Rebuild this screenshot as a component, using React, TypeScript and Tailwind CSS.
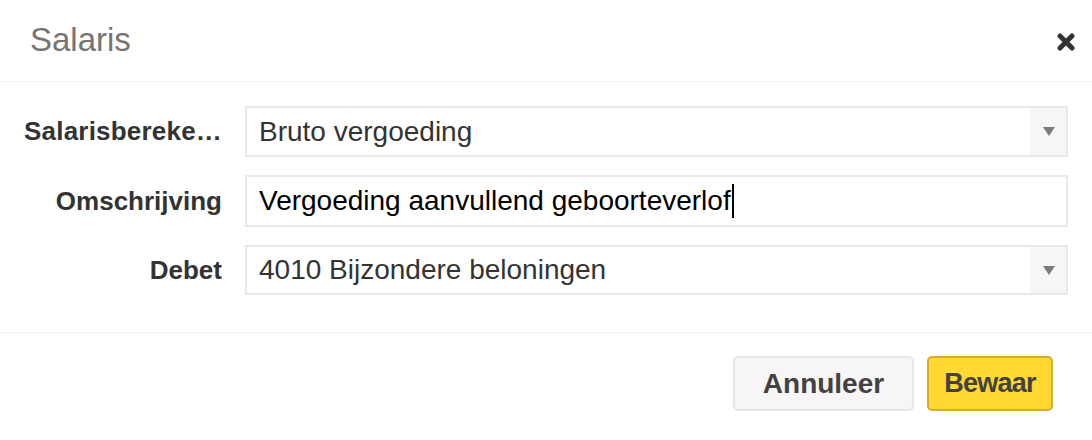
import React from "react";

function Caret() {
  return (
    <div className="w-[36px] self-stretch bg-[#f7f6f6] flex items-center justify-center pl-[2px]">
      <svg width="12" height="9" viewBox="0 0 12 9">
        <polygon points="0,0 12,0 6,9" fill="#7d7b7b" />
      </svg>
    </div>
  );
}

export default function App() {
  const font = { fontFamily: '"Liberation Sans", Arial, Helvetica, sans-serif' };
  return (
    <div className="w-[1092px] h-[440px] bg-white flex flex-col" style={font}>
      <div className="h-[82px] flex items-center justify-between pl-[30px] pr-[17px] border-b border-[#f3f2f2]">
        <div className="text-[33px] leading-none text-[#777372] pb-[2px]">Salaris</div>
        <svg width="18" height="18" viewBox="0 0 18 18" className="mt-[2px]">
          <path d="M3 3 L15 15 M15 3 L3 15" stroke="#333" strokeWidth="5" strokeLinecap="round" />
        </svg>
      </div>
      <div className="flex flex-col gap-[18px] pt-[24px] pb-[37px] pr-[24px] border-b border-[#f3f2f2]">
        <div className="flex items-center">
          <div className="w-[222px] text-right font-bold text-[26px] text-[#333] whitespace-nowrap tracking-[0.2px]">Salarisbereke…</div>
          <div className="ml-[23px] flex-1 h-[51px] border-2 border-[#ebe7e7] flex items-center">
            <div className="flex-1 pl-[12px] text-[28px] text-[#333]">Bruto vergoeding</div>
            <Caret />
          </div>
        </div>
        <div className="flex items-center">
          <div className="w-[222px] text-right font-bold text-[26px] text-[#333]">Omschrijving</div>
          <div className="ml-[23px] flex-1 h-[52px] border-2 border-[#ebe7e7] flex items-center">
            <div className="pl-[12px] text-[28px] text-black flex items-center">
              Vergoeding aanvullend geboorteverlof
              <span className="inline-block w-[2px] h-[34px] bg-black ml-[1px]"></span>
            </div>
          </div>
        </div>
        <div className="flex items-center">
          <div className="w-[222px] text-right font-bold text-[26px] text-[#333]">Debet</div>
          <div className="ml-[23px] flex-1 h-[50px] border-2 border-[#ebe7e7] flex items-center">
            <div className="flex-1 pl-[12px] text-[28px] text-[#333]">4010 Bijzondere beloningen</div>
            <Caret />
          </div>
        </div>
      </div>
      <div className="flex justify-end gap-[13px] pt-[23px] pr-[39px]">
        <button className="w-[181px] h-[55px] rounded-[5px] border-2 border-[#e8e6e6] bg-[#f7f5f6] text-[28px] font-bold text-[#444140]">Annuleer</button>
        <button className="w-[126px] h-[55px] rounded-[5px] border-2 border-[#d4ae2c] bg-[#ffd931] text-[27px] tracking-[-0.8px] font-bold text-[#444140]">Bewaar</button>
      </div>
    </div>
  );
}
